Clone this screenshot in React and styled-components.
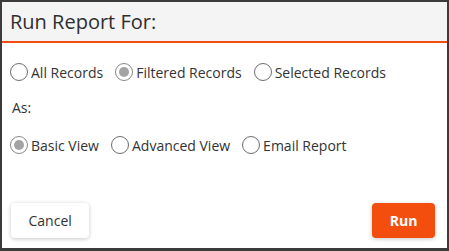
import React, { useState } from 'react';
import styled, { createGlobalStyle } from 'styled-components';

const GlobalStyle = createGlobalStyle`
  html, body {
    margin: 0;
    padding: 0;
    background: #ffffff;
  }
  body {
    font-family: "Open Sans", "Liberation Sans", sans-serif;
  }
`;

const Dialog = styled.div`
  width: 449px;
  height: 251px;
  box-sizing: border-box;
  border: 2px solid #3b3b3b;
  border-bottom-width: 3px;
  background: #fff;
  display: flex;
  flex-direction: column;
`;

const Header = styled.div`
  height: 39px;
  background: #f4f4f4;
  border-bottom: 2px solid #f04e12;
  display: flex;
  align-items: center;
  padding: 0 8px;
`;

const Title = styled.h2`
  margin: 0;
  font-size: 20px;
  font-weight: 400;
  color: #2f2f2f;
`;

const Body = styled.div`
  flex: 1;
  padding: 17px 8px 0;
  display: flex;
  flex-direction: column;
`;

const RadioRow = styled.div`
  display: flex;
  align-items: center;
  gap: 12px;
  height: 24px;
`;

const Label = styled.div`
  font-size: 14px;
  color: #333;
  margin: 14px 0 15px 2px;
  line-height: 20px;
`;

const Option = styled.label`
  display: flex;
  align-items: center;
  gap: 3px;
  font-size: 14px;
  color: #333;
  cursor: pointer;
`;

const Circle = styled.span`
  width: 18px;
  height: 18px;
  box-sizing: border-box;
  border-radius: 50%;
  border: 1.5px solid ${({ checked }) => (checked ? '#8a8a8a' : '#6e6e6e')};
  display: inline-flex;
  align-items: center;
  justify-content: center;
  &::after {
    content: '';
    width: 10px;
    height: 10px;
    border-radius: 50%;
    background: ${({ checked }) => (checked ? '#a3a3a3' : 'transparent')};
  }
`;

const Footer = styled.div`
  display: flex;
  justify-content: space-between;
  align-items: center;
  padding: 0 12px 10px 9px;
`;

const Button = styled.button`
  height: 35px;
  padding: 0 17.5px;
  border: none;
  border-radius: 4px;
  font-family: "Open Sans", "Liberation Sans", sans-serif;
  font-size: 14px;
  font-weight: ${({ primary }) => (primary ? 700 : 400)};
  color: ${({ primary }) => (primary ? '#fff' : '#333')};
  background: ${({ primary }) => (primary ? '#f44e0e' : '#fff')};
  box-shadow: 0 1px 4px rgba(0, 0, 0, 0.22);
  cursor: pointer;
`;

const Radio = ({ label, checked, onClick }) => (
  <Option onClick={onClick}>
    <Circle checked={checked} />
    {label}
  </Option>
);

export default function App() {
  const [scope, setScope] = useState('filtered');
  const [view, setView] = useState('basic');

  return (
    <>
      <GlobalStyle />
      <Dialog>
        <Header>
          <Title>Run Report For:</Title>
        </Header>
        <Body>
          <RadioRow>
            <Radio label="All Records" checked={scope === 'all'} onClick={() => setScope('all')} />
            <Radio label="Filtered Records" checked={scope === 'filtered'} onClick={() => setScope('filtered')} />
            <Radio label="Selected Records" checked={scope === 'selected'} onClick={() => setScope('selected')} />
          </RadioRow>
          <Label>As:</Label>
          <RadioRow>
            <Radio label="Basic View" checked={view === 'basic'} onClick={() => setView('basic')} />
            <Radio label="Advanced View" checked={view === 'advanced'} onClick={() => setView('advanced')} />
            <Radio label="Email Report" checked={view === 'email'} onClick={() => setView('email')} />
          </RadioRow>
        </Body>
        <Footer>
          <Button>Cancel</Button>
          <Button primary>Run</Button>
        </Footer>
      </Dialog>
    </>
  );
}
